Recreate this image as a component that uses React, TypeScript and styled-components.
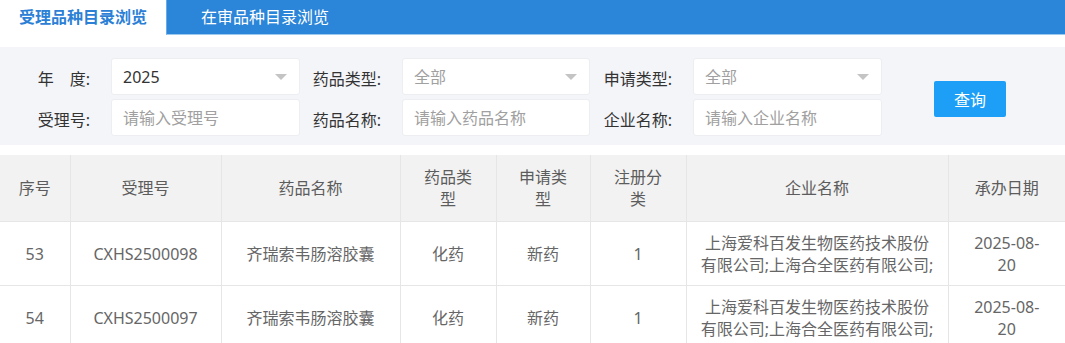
import React from 'react';
import styled, { createGlobalStyle } from 'styled-components';

const GlobalStyle = createGlobalStyle`
    body {
        margin: 0;
        background: #fff;
        font-family: "Noto Sans", "Noto Sans CJK SC", sans-serif;
    }
`;

const Page = styled.div`
    width: 1065px;
`;

const TabBar = styled.div`
    display: flex;
    height: 35px;
    background: #2b85d8;
`;

const Tab = styled.div<{ $active?: boolean }>`
    height: 35px;
    line-height: 34px;
    font-size: 16px;
    box-sizing: border-box;
    ${p => p.$active
        ? `width: 166px;
           background: #fff;
           color: #2b80d6;
           font-weight: bold;
           text-align: center;`
        : `flex: 1;
           padding-left: 34px;
           color: #fff;
           border-left: 1px solid #6aaae6;
           border-bottom: 1px solid #9ecaf0;`}
`;

const FilterPanel = styled.div`
    margin-top: 12px;
    background: #f4f5f9;
    padding: 11px 0 9px;
    display: flex;
    align-items: center;
`;

const FilterGrid = styled.div`
    display: grid;
    grid-template-columns: 111px 189px 102px 188px 103px 189px;
    grid-auto-rows: 37px;
    row-gap: 4px;
`;

const Label = styled.label`
    align-self: center;
    padding-top: 2px;
    text-align: right;
    padding-right: 21px;
    font-size: 16px;
    color: #333;
    white-space: nowrap;
`;

const Field = styled.div<{ $select?: boolean; $placeholder?: boolean }>`
    position: relative;
    box-sizing: border-box;
    height: 37px;
    line-height: 37px;
    padding-left: 11px;
    background: #fff;
    border: 1px solid #eceef2;
    border-radius: 3px;
    font-size: 16px;
    color: ${p => (p.$placeholder ? '#a0a0a0' : '#333')};
`;

const Caret = styled.span`
    position: absolute;
    right: 12px;
    top: 15px;
    width: 0;
    height: 0;
    border-left: 6px solid transparent;
    border-right: 6px solid transparent;
    border-top: 6px solid #c4c4c4;
`;

const SearchButton = styled.button`
    margin-left: 52px;
    margin-top: 4px;
    width: 72px;
    height: 36px;
    border: none;
    border-radius: 2px;
    background: #1e9ff7;
    color: #fff;
    font-size: 16px;
    font-family: inherit;
    cursor: pointer;
`;

const Table = styled.table`
    margin-top: 10px;
    width: 1065px;
    table-layout: fixed;
    border-collapse: collapse;
    font-size: 16px;
    line-height: 22px;
    color: #666;
`;

const HeadCell = styled.th<{ $pad: number }>`
    height: 66px;
    padding: 0 ${p => p.$pad}px;
    background: #f2f2f2;
    font-weight: normal;
    color: #5c5c5c;
    text-align: center;
    border: 1px solid #e6e6e6;
    border-top: none;
    &:first-child { border-left: none; }
    &:last-child { border-right: none; }
`;

const Cell = styled.td<{ $pad: number }>`
    height: 63px;
    padding: 0 ${p => p.$pad}px;
    text-align: center;
    border: 1px solid #e6e6e6;
    &:first-child { border-left: none; }
    &:last-child { border-right: none; }
`;

interface Column {
    key: keyof Row;
    title: string;
    width: number;
    pad: number;
}

interface Row {
    no: string;
    acceptNo: string;
    drug: string;
    drugType: string;
    applyType: string;
    regClass: string;
    company: string;
    date: string;
}

const columns: Column[] = [
    { key: 'no', title: '序号', width: 70, pad: 8 },
    { key: 'acceptNo', title: '受理号', width: 151, pad: 16 },
    { key: 'drug', title: '药品名称', width: 179, pad: 16 },
    { key: 'drugType', title: '药品类型', width: 96, pad: 18 },
    { key: 'applyType', title: '申请类型', width: 94, pad: 17 },
    { key: 'regClass', title: '注册分类', width: 96, pad: 18 },
    { key: 'company', title: '企业名称', width: 262, pad: 13 },
    { key: 'date', title: '承办日期', width: 117, pad: 20 },
];

const rows: Row[] = [
    {
        no: '53', acceptNo: 'CXHS2500098', drug: '齐瑞索韦肠溶胶囊', drugType: '化药',
        applyType: '新药', regClass: '1',
        company: '上海爱科百发生物医药技术股份有限公司;上海合全医药有限公司;', date: '2025-08-20',
    },
    {
        no: '54', acceptNo: 'CXHS2500097', drug: '齐瑞索韦肠溶胶囊', drugType: '化药',
        applyType: '新药', regClass: '1',
        company: '上海爱科百发生物医药技术股份有限公司;上海合全医药有限公司;', date: '2025-08-20',
    },
];

const App: React.FC = () => {
    return (
        <Page>
            <GlobalStyle />
            <TabBar>
                <Tab $active>受理品种目录浏览</Tab>
                <Tab>在审品种目录浏览</Tab>
            </TabBar>

            <FilterPanel>
                <FilterGrid>
                    <Label>年&#12288;度:</Label>
                    <Field $select>2025<Caret /></Field>
                    <Label>药品类型:</Label>
                    <Field $select $placeholder>全部<Caret /></Field>
                    <Label>申请类型:</Label>
                    <Field $select $placeholder>全部<Caret /></Field>

                    <Label>受理号:</Label>
                    <Field $placeholder>请输入受理号</Field>
                    <Label>药品名称:</Label>
                    <Field $placeholder>请输入药品名称</Field>
                    <Label>企业名称:</Label>
                    <Field $placeholder>请输入企业名称</Field>
                </FilterGrid>
                <SearchButton>查询</SearchButton>
            </FilterPanel>

            <Table>
                <colgroup>
                    {columns.map(c => <col key={c.key} style={{ width: c.width }} />)}
                </colgroup>
                <thead>
                    <tr>
                        {columns.map(c => <HeadCell key={c.key} $pad={c.pad}>{c.title}</HeadCell>)}
                    </tr>
                </thead>
                <tbody>
                    {rows.map(r => (
                        <tr key={r.no}>
                            {columns.map(c => <Cell key={c.key} $pad={c.pad}>{r[c.key]}</Cell>)}
                        </tr>
                    ))}
                </tbody>
            </Table>
        </Page>
    );
}

export default App;
